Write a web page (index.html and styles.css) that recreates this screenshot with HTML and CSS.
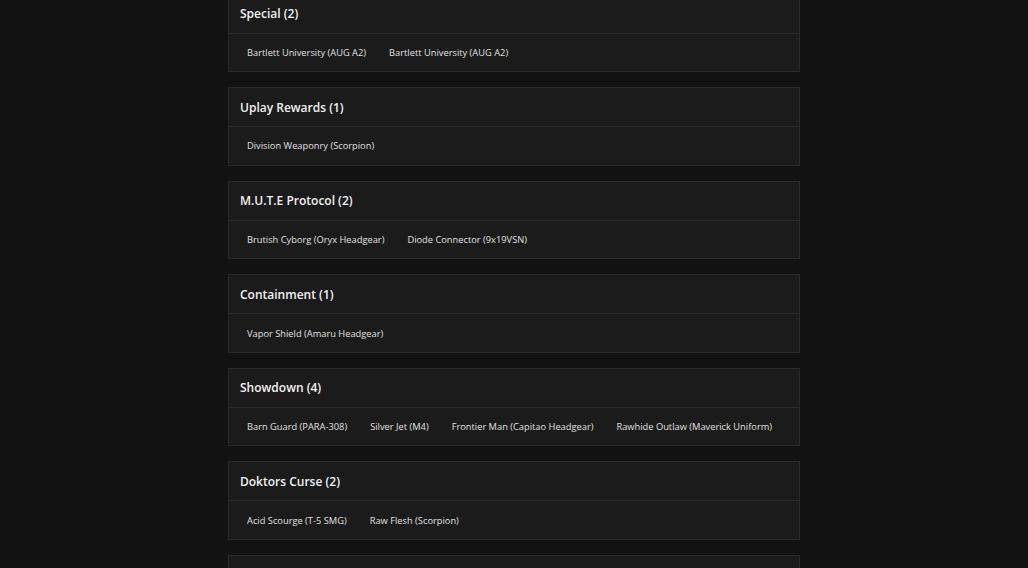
FILE: index.html
```html
<!DOCTYPE html>
<html lang="en">
<head>
    <meta charset="UTF-8">
    <meta name="viewport" content="width=device-width, initial-scale=1.0">
    <title>Collections</title>
    <link rel="stylesheet" href="styles.css">
</head>
<body>

    <!-- Collection list -->
    <div class="collections">

        <section class="collection">
            <div class="collection-header"><h3>Special (2)</h3></div>
            <div class="collection-items">
                <span class="item">Bartlett University (AUG A2)</span>
                <span class="item">Bartlett University (AUG A2)</span>
            </div>
        </section>

        <section class="collection">
            <div class="collection-header"><h3>Uplay Rewards (1)</h3></div>
            <div class="collection-items">
                <span class="item">Division Weaponry (Scorpion)</span>
            </div>
        </section>

        <section class="collection">
            <div class="collection-header"><h3>M.U.T.E Protocol (2)</h3></div>
            <div class="collection-items">
                <span class="item">Brutish Cyborg (Oryx Headgear)</span>
                <span class="item">Diode Connector (9x19VSN)</span>
            </div>
        </section>

        <section class="collection">
            <div class="collection-header"><h3>Containment (1)</h3></div>
            <div class="collection-items">
                <span class="item">Vapor Shield (Amaru Headgear)</span>
            </div>
        </section>

        <section class="collection">
            <div class="collection-header"><h3>Showdown (4)</h3></div>
            <div class="collection-items">
                <span class="item">Barn Guard (PARA-308)</span>
                <span class="item">Silver Jet (M4)</span>
                <span class="item">Frontier Man (Capitao Headgear)</span>
                <span class="item">Rawhide Outlaw (Maverick Uniform)</span>
            </div>
        </section>

        <section class="collection">
            <div class="collection-header"><h3>Doktors Curse (2)</h3></div>
            <div class="collection-items">
                <span class="item">Acid Scourge (T-5 SMG)</span>
                <span class="item">Raw Flesh (Scorpion)</span>
            </div>
        </section>

        <section class="collection">
            <div class="collection-header"><h3>Outbreak (3)</h3></div>
            <div class="collection-items">
                <span class="item">Infected (Finka Headgear)</span>
            </div>
        </section>

    </div>

</body>
</html>
```

FILE: styles.css
```css
/* Page */
body {
    margin: 0;
    background-color: #121212;
    font-family: 'Open Sans', 'Noto Sans', Arial, sans-serif;
    color: #e6e6e6;
}

/* List of collections */
.collections {
    width: 572px;
    margin: -6.5px auto 0;
    display: flex;
    flex-direction: column;
    gap: 15px;
}

/* Single collection card */
.collection {
    background-color: #1b1b1b;
    border: 1px solid #2a2a2a;
}

.collection-header {
    height: 38px;
    padding: 0 11px;
    display: flex;
    align-items: center;
    border-bottom: 1px solid #2a2a2a;
}

.collection-header h3 {
    margin: 0;
    font-size: 12px;
    font-weight: 600;
    color: #f2f2f2;
}

.collection-items {
    height: 37.6px;
    padding: 0 18px;
    display: flex;
    align-items: center;
    gap: 23px;
}

.item {
    font-size: 9.3px;
    color: #e0e0e0;
    white-space: nowrap;
}
```
